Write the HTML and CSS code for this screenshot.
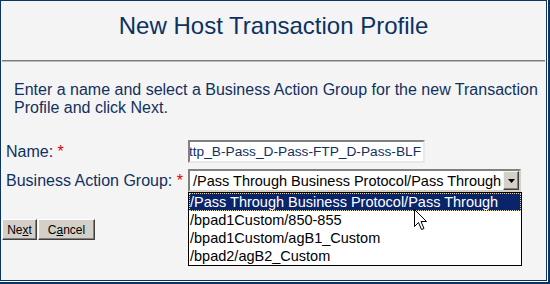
FILE: index.html
```html
<!DOCTYPE html>
<html>
<head>
<meta charset="utf-8">
<link rel="stylesheet" href="styles.css">
</head>
<body>
<div class="frame">
  <div class="panel">
    <div class="header"><h1 class="title">New Host Transaction Profile</h1></div>
    <div class="rule"></div>
    <p class="intro">Enter a name and select a Business Action Group for the new Transaction Profile and click Next.</p>
    <div class="form">
      <label class="lbl">Name: <span class="req">*</span></label>
      <div class="input"><span class="input-text">http_B-Pass_D-Pass-FTP_D-Pass-BLF</span></div>
      <label class="lbl">Business Action Group: <span class="req">*</span></label>
      <div class="select-wrap">
        <div class="select">
          <span class="sel-text">/Pass Through Business Protocol/Pass Through</span>
          <span class="sel-btn"><svg width="7" height="4" viewBox="0 0 7 4"><path d="M0 0H7L3.5 4Z" fill="#000"/></svg></span>
        </div>
        <ul class="options">
          <li class="opt active">/Pass Through Business Protocol/Pass Through</li>
          <li class="opt">/bpad1Custom/850-855</li>
          <li class="opt">/bpad1Custom/agB1_Custom</li>
          <li class="opt">/bpad2/agB2_Custom</li>
        </ul>
        <svg class="cursor" width="13" height="21" viewBox="0 0 13 21"><path d="M0.5 0.5V17.5L4.5 13.5L7.5 20.5L10 19.5L7 12.5H12.5Z" fill="#fff" stroke="#000" stroke-width="1" stroke-linejoin="miter"/></svg>
      </div>
    </div>
    <div class="buttons">
      <button class="btn btn-next">Ne<u>x</u>t</button>
      <button class="btn btn-cancel">C<u>a</u>ncel</button>
    </div>
  </div>
</div>
</body>
</html>
```
FILE: styles.css
```css
* { box-sizing: border-box; }
html, body { margin: 0; padding: 0; background: #ffffff; }
body { font-family: "Liberation Sans", Arial, sans-serif; }

.frame {
  width: 550px;
  height: 284px;
  border-right: 2px solid #0c3462;
  border-bottom: 2px solid #0c3462;
  background: #ffffff;
}
.panel {
  width: 547px;
  height: 281px;
  border: 1px solid #0c3462;
  background: #f4f4f4;
  position: relative;
}
.header {
  height: 59px;
  padding-top: 11px;
}
.title {
  margin: 0;
  font-weight: normal;
  font-size: 24px;
  line-height: 28px;
  text-align: center;
  color: #0b3263;
}
.rule {
  margin: 0 1px;
  border-top: 1px solid #7c7c7c;
  border-bottom: 1px solid #b8b8b8;
}
.intro {
  margin: 19px 0 0 0;
  padding-left: 13px;
  width: 545px;
  font-size: 16px;
  line-height: 18px;
  color: #12305e;
}
.form {
  margin-top: 23px;
  padding-left: 5px;
  display: grid;
  grid-template-columns: 182px auto;
  row-gap: 6px;
  align-items: center;
}
.lbl {
  font-size: 16px;
  line-height: 18px;
  color: #12305e;
}
.req { color: #e00000; }

.input {
  width: 237px;
  height: 23px;
  border-style: solid;
  border-width: 2px;
  border-color: #808080 #e8e8e8 #e8e8e8 #808080;
  background: #ffffff;
  overflow: hidden;
  display: flex;
  justify-content: flex-end;
  align-items: center;
  padding-right: 2px;
}
.input-text {
  white-space: nowrap;
  font-size: 13.7px;
  color: #12305e;
}

.select-wrap { position: relative; width: 334px; }
.select {
  width: 333px;
  height: 23px;
  border-style: solid;
  border-width: 2px;
  border-color: #808080 #d4d0c8 #d4d0c8 #808080;
  background: #ffffff;
  display: flex;
  align-items: center;
  justify-content: space-between;
  padding-left: 3px;
  padding-right: 0;
}
.sel-text {
  white-space: nowrap;
  font-size: 14.5px;
  color: #000;
}
.sel-btn {
  width: 16px;
  height: 19px;
  background: #d4d0c8;
  border-style: solid;
  border-width: 1px;
  border-color: #f4f4f4 #404040 #404040 #f4f4f4;
  box-shadow: inset -1px -1px 0 #808080;
  display: flex;
  align-items: center;
  justify-content: center;
}
.options {
  position: absolute;
  left: 0;
  top: 23px;
  width: 334px;
  margin: 0;
  padding: 0;
  list-style: none;
  border: 1px solid #000;
  background: #ffffff;
  z-index: 2;
}
.opt {
  height: 18px;
  line-height: 18px;
  padding-left: 1px;
  font-size: 14.5px;
  color: #000;
  white-space: nowrap;
}
.opt.active {
  background: #0a246a;
  color: #ffffff;
  outline: 1px dotted #e8d890;
  outline-offset: -1px;
}
.cursor {
  position: absolute;
  left: 226px;
  top: 40px;
  z-index: 3;
}

.buttons {
  margin-top: 27px;
  padding-left: 1px;
  display: flex;
  gap: 1px;
}
.btn {
  height: 21px;
  margin: 0;
  padding: 0;
  font-family: "Liberation Sans", Arial, sans-serif;
  font-size: 12px;
  color: #000;
  background: #d4d0c8;
  border-style: solid;
  border-width: 1px;
  border-color: #ffffff #404040 #404040 #ffffff;
  box-shadow: inset -1px -1px 0 #808080;
}
.btn-next { width: 35px; }
.btn-cancel { width: 57px; }
```
